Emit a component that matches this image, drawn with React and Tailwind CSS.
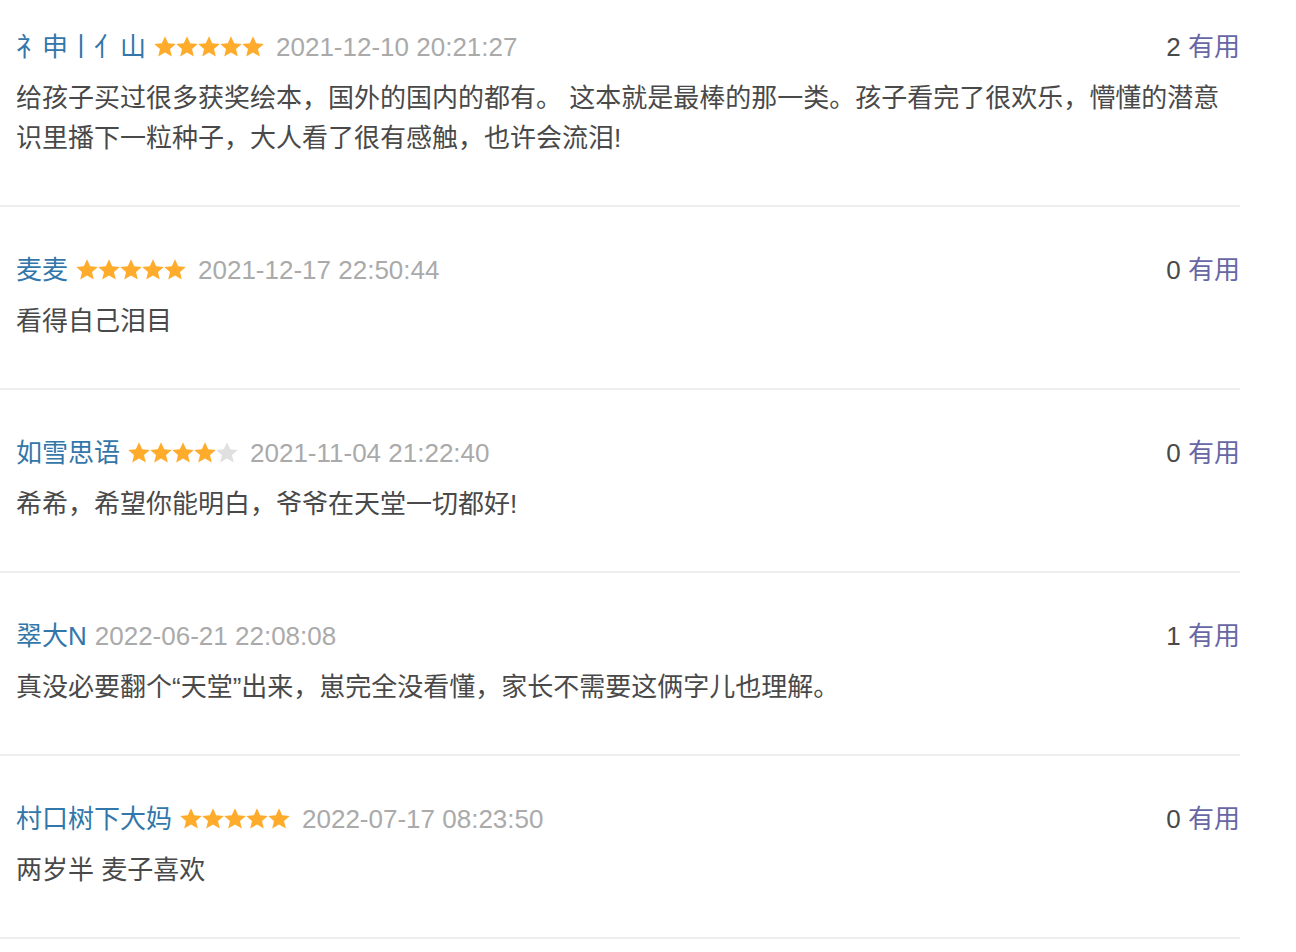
import React from "react";

const reviews = [
  {
    id: 1,
    name: "礻申丨亻山",
    stars: 5,
    date: "2021-12-10 20:21:27",
    votes: 2,
    text: "给孩子买过很多获奖绘本，国外的国内的都有。 这本就是最棒的那一类。孩子看完了很欢乐，懵懂的潜意识里播下一粒种子，大人看了很有感触，也许会流泪!",
  },
  { id: 2, name: "麦麦", stars: 5, date: "2021-12-17 22:50:44", votes: 0, text: "看得自己泪目" },
  {
    id: 3,
    name: "如雪思语",
    stars: 4,
    date: "2021-11-04 21:22:40",
    votes: 0,
    text: "希希，希望你能明白，爷爷在天堂一切都好!",
  },
  {
    id: 4,
    name: "翠大N",
    stars: 0,
    date: "2022-06-21 22:08:08",
    votes: 1,
    text: "真没必要翻个“天堂”出来，崽完全没看懂，家长不需要这俩字儿也理解。",
  },
  { id: 5, name: "村口树下大妈", stars: 5, date: "2022-07-17 08:23:50", votes: 0, text: "两岁半 麦子喜欢" },
];

function Star({ on }) {
  return (
    <svg width="22" height="22" viewBox="1 1.2 22 22" className="block">
      <path
        d="M12 1.4l3.2 7 7.6.7-5.8 5.1 1.8 7.5L12 17.8l-6.8 3.9 1.8-7.5-5.8-5.1 7.6-.7z"
        fill={on ? "#ffac2d" : "#e0e0e0"}
      />
    </svg>
  );
}

function Stars({ count }) {
  return (
    <span className="flex items-center mr-3">
      {[1, 2, 3, 4, 5].map((n) => (
        <Star key={n} on={n <= count} />
      ))}
    </span>
  );
}

export default function App() {
  return (
    <div
      className="w-full min-h-screen bg-white overflow-hidden"
      style={{ fontFamily: '"Liberation Sans", "Noto Sans CJK SC", sans-serif' }}
    >
      <div className="w-[1240px] -mt-4">
        {reviews.map((r) => (
          <div key={r.id} className="pl-4 pt-[43px] pb-[47px] border-b-2 border-[#eeeeee]">
            {/* header */}
            <div className="flex items-center h-10 text-[26px] leading-10">
              <span className="text-[#3377aa] mr-2">{r.name}</span>
              {r.stars > 0 && <Stars count={r.stars} />}
              <span className="text-[#aaaaaa]">{r.date}</span>
              <span className="ml-auto text-[#494949]">
                {r.votes} <span className="text-[#6767a5]">有用</span>
              </span>
            </div>
            {/* body */}
            <p className="mt-[11px] text-[26px] leading-10 text-[#494949]">{r.text}</p>
          </div>
        ))}
      </div>
    </div>
  );
}
